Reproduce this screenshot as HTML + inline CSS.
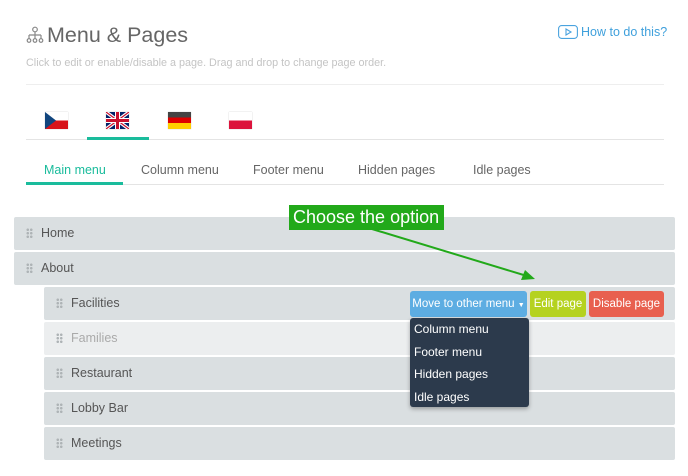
<!DOCTYPE html>
<html><head><meta charset="utf-8"><style>
*{margin:0;padding:0;box-sizing:border-box}
body{width:688px;height:476px;background:#fff;font-family:"Liberation Sans",sans-serif;position:relative;overflow:hidden}
.a{position:absolute}
.row{position:absolute;background:#dadfe1;height:33px;border-radius:2px;font-size:12.5px;color:#555;line-height:33px}
.row .h{position:absolute;top:11px;width:7px;height:11px;background:radial-gradient(circle,#aeb3b6 1.1px,transparent 1.5px) 0 0/3.5px 3.5px}
.tab{position:absolute;top:163px;font-size:12.5px;color:#666}
.flag{position:absolute;top:112px;width:23px;height:17px;box-shadow:0 0 1px #bbb}
.btn{position:absolute;top:291px;height:26px;line-height:26px;color:#fff;font-size:11.5px;border-radius:3px;text-align:center;white-space:nowrap}
.dd{position:absolute;left:410px;top:318px;width:119px;height:89px;background:#2c3a4c;border-radius:3px;color:#fff;font-size:12px;box-shadow:0 2px 4px rgba(0,0,0,.3)}
.dd div{height:22.5px;line-height:22px;padding-left:4px}
</style></head><body>
<svg class="a" style="left:26px;top:26px" width="18" height="18" viewBox="0 0 18 18" fill="none" stroke="#888" stroke-width="1.2"><circle cx="9" cy="3.5" r="2.3"/><path d="M9 6v3M3 9h12M3 9v4M9 9v4M15 9v4"/><circle cx="3" cy="14.5" r="1.8"/><circle cx="9" cy="14.5" r="1.8"/><circle cx="15" cy="14.5" r="1.8"/></svg>
<div class="a" style="left:47px;top:23px;font-size:21.5px;color:#666">Menu &amp; Pages</div>
<div class="a" style="left:26px;top:57px;font-size:10.8px;color:#c4c4c4">Click to edit or enable/disable a page. Drag and drop to change page order.</div>
<svg class="a" style="left:558px;top:25px" width="20" height="14" viewBox="0 0 20 14" fill="none" stroke="#4aa3df" stroke-width="1.1"><rect x="0.6" y="0.6" width="18.8" height="12.8" rx="3"/><path d="M8 4l5 3-5 3z"/></svg>
<div class="a" style="left:581px;top:25px;font-size:12.5px;color:#3fa0dc">How to do this?</div>
<div class="a" style="left:26px;top:84px;width:638px;height:1px;background:#eee"></div>
<div class="flag" style="left:45px;background:linear-gradient(#fff 50%,#d7141a 50%)"><svg width="23" height="17" style="display:block"><path d="M0 0L11 8.5L0 17z" fill="#11457e"/></svg></div>
<div class="flag" style="left:106px;background:#012169"><svg width="23" height="17" style="display:block"><path d="M0 0L23 17M23 0L0 17" stroke="#fff" stroke-width="3.5"/><path d="M0 0L23 17M23 0L0 17" stroke="#c8102e" stroke-width="1.2"/><path d="M11.5 0v17M0 8.5h23" stroke="#fff" stroke-width="5"/><path d="M11.5 0v17M0 8.5h23" stroke="#c8102e" stroke-width="3"/></svg></div>
<div class="flag" style="left:168px;background:linear-gradient(#444 33%,#dd0000 33% 66%,#ffce00 66%)"></div>
<div class="flag" style="left:229px;background:linear-gradient(#fff 50%,#dc143c 50%)"></div>
<div class="a" style="left:26px;top:139px;width:638px;height:1px;background:#e4e4e4"></div>
<div class="a" style="left:87px;top:137px;width:62px;height:3px;background:#1abc9c"></div>
<div class="tab" style="left:44px;color:#1abc9c">Main menu</div>
<div class="tab" style="left:141px">Column menu</div>
<div class="tab" style="left:253px">Footer menu</div>
<div class="tab" style="left:358px">Hidden pages</div>
<div class="tab" style="left:473px">Idle pages</div>
<div class="a" style="left:26px;top:184px;width:638px;height:1px;background:#e4e4e4"></div>
<div class="a" style="left:26px;top:182px;width:97px;height:3px;background:#1abc9c"></div>

<div class="row" style="left:14px;top:217px;width:661px"><span class="h" style="left:12px"></span><span style="position:absolute;left:27px">Home</span></div>
<div class="row" style="left:14px;top:252px;width:661px"><span class="h" style="left:12px"></span><span style="position:absolute;left:27px">About</span></div>
<div class="row" style="left:44px;top:287px;width:631px"><span class="h" style="left:12px"></span><span style="position:absolute;left:27px">Facilities</span></div>
<div class="row" style="left:44px;top:322px;width:631px;background:#eceeef;color:#aaa"><span class="h" style="left:12px"></span><span style="position:absolute;left:27px">Families</span></div>
<div class="row" style="left:44px;top:357px;width:631px"><span class="h" style="left:12px"></span><span style="position:absolute;left:27px">Restaurant</span></div>
<div class="row" style="left:44px;top:392px;width:631px"><span class="h" style="left:12px"></span><span style="position:absolute;left:27px">Lobby Bar</span></div>
<div class="row" style="left:44px;top:427px;width:631px"><span class="h" style="left:12px"></span><span style="position:absolute;left:27px">Meetings</span></div>

<div class="btn" style="left:410px;width:117px;background:#5dade2">Move to other menu <span style="font-size:7px">&#9660;</span></div>
<div class="btn" style="left:530px;width:56px;background:#b5d220">Edit page</div>
<div class="btn" style="left:589px;width:75px;background:#e8604f">Disable page</div>
<div class="dd"><div>Column menu</div><div>Footer menu</div><div>Hidden pages</div><div>Idle pages</div></div>

<div class="a" style="left:289px;top:205px;width:155px;height:25px;background:#22a91a;color:#fff;font-size:18px;line-height:25px;padding-left:4px;white-space:nowrap">Choose the option</div>
<svg class="a" style="left:0;top:0" width="688" height="476"><path d="M372 229L527 276" stroke="#22a91a" stroke-width="2"/><path d="M535 279L521 280L525 270z" fill="#22a91a"/></svg>
</body></html>
